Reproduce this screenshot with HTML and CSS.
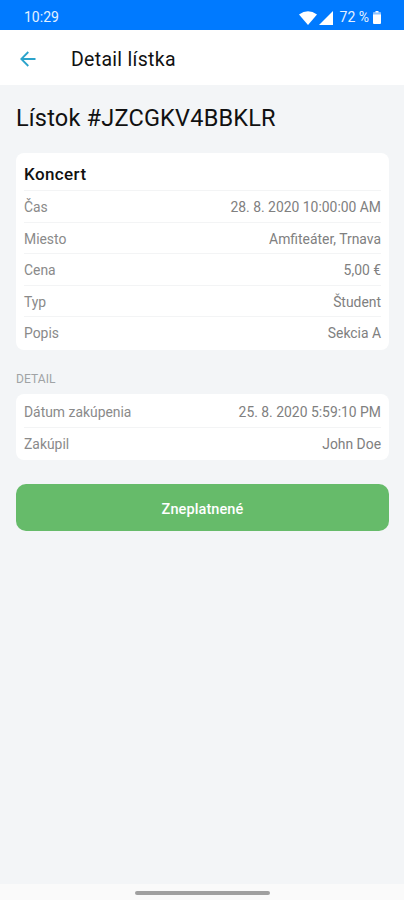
FILE: index.html
```
<!DOCTYPE html>
<html lang="sk">
<head>
<meta charset="utf-8">
<title>Detail lístka</title>
<link rel="stylesheet" href="styles.css">
</head>
<body>
<div class="status">
  <span class="clock">10:29</span>
  <svg class="wifi" viewBox="0 0 18 14"><path d="M0 3.500Q9-3 18 3.500L9 14Z" fill="#fff"/></svg>
  <svg class="signal" viewBox="0 0 14 14"><path d="M14 0V14H0Z" fill="#fff"/></svg>
  <span class="percent">72 %</span>
  <svg class="battery" viewBox="0 0 8 13"><path d="M2.500 0h3v1.500H7a1 1 0 0 1 1 1V12a1 1 0 0 1-1 1H1a1 1 0 0 1-1-1V2.500a1 1 0 0 1 1-1h1.500Z" fill="#fff"/><path d="M0 1.500h8v2H0Z" fill="#8cc2ff"/></svg>
</div>
<header class="appbar">
  <svg class="back" viewBox="0 0 16 16" fill="none" stroke="#2ba3cb" stroke-width="1.800"><path d="M15.500 8H1.500M8.300 1L1.300 8l7 7"/></svg>
  <span class="appbar-title">Detail lístka</span>
</header>
<main class="content">
  <h1 class="heading"><span>Lístok #JZCGKV4BBKLR</span></h1>
  <section class="card">
    <h2 class="card-title"><span>Koncert</span></h2>
    <div class="row"><span>Čas</span><span class="value">28. 8. 2020 10:00:00 AM</span></div>
    <div class="row"><span>Miesto</span><span class="value">Amfiteáter, Trnava</span></div>
    <div class="row"><span>Cena</span><span class="value">5,00 €</span></div>
    <div class="row"><span>Typ</span><span class="value">Študent</span></div>
    <div class="row"><span>Popis</span><span class="value">Sekcia A</span></div>
  </section>
  <h3 class="label"><span>DETAIL</span></h3>
  <section class="card card-small">
    <div class="row"><span>Dátum zakúpenia</span><span class="value">25. 8. 2020 5:59:10 PM</span></div>
    <div class="row"><span>Zakúpil</span><span class="value">John Doe</span></div>
  </section>
  <button class="action"><span>Zneplatnené</span></button>
</main>
<footer class="navbar"><div class="handle"></div></footer>
</body>
</html>
```
FILE: styles.css
```
* { box-sizing: border-box; }
body {
  margin: 0;
  height: 900px;
  display: flex;
  flex-direction: column;
  overflow: hidden;
  background: #f3f5f7;
  font-family: Roboto, sans-serif;
  color: #111;
}
.status {
  height: 30px;
  flex: none;
  display: flex;
  align-items: center;
  padding: 5px 23px 0 24px;
  background: #007aff;
  color: #e4f1ff;
  font-size: 14px;
}
.clock { margin-right: auto; padding-bottom: 1px; }
.wifi { width: 18px; height: 14px; margin-right: 2px; }
.signal { width: 14px; height: 14px; margin-right: 7px; }
.percent { margin-right: 4px; padding-bottom: 1px; }
.battery { width: 8px; height: 13px; }
.appbar {
  height: 55px;
  flex: none;
  display: flex;
  align-items: center;
  padding: 2px 20px 0;
  background: #fff;
}
.back { width: 16px; height: 16px; margin-right: 35px; }
.appbar-title { padding-top: 2px; font-size: 19.500px; letter-spacing: 0.3px; }
.content { flex: 1; padding: 0 15px 0 16px; }
.heading {
  margin: 0;
  height: 68px;
  line-height: 67px;
  font-size: 23.500px;
  font-weight: 400;
  letter-spacing: 0.200px;
}
.card {
  height: 197px;
  padding: 0 8px;
  border-radius: 8px;
  background: #fff;
}
.card-title {
  margin: 0;
  height: 37px;
  line-height: 42px;
  font-size: 17px;
  font-weight: 500;
  letter-spacing: 0.400px;
}
.row {
  height: 31.500px;
  display: flex;
  align-items: center;
  justify-content: space-between;
  padding-top: 2px;
  border-top: 1px solid #f3f4f5;
  color: #8a8a8a;
  font-size: 13.900px;
}
.value { color: #808080; }
.label {
  margin: 0;
  height: 44px;
  line-height: 58px;
  font-size: 12px;
  font-weight: 400;
  letter-spacing: 0.1px;
  color: #a0a3a5;
}
.card-small { height: 66px; padding-top: 1px; }
.card-small .row:first-child { border-top-color: transparent; }
.action {
  display: block;
  width: 100%;
  height: 47px;
  margin-top: 24px;
  padding: 3px 0 0;
  border: 0;
  border-radius: 10px;
  background: #66bb6a;
  color: #fff;
  font: 500 14.500px Roboto, sans-serif;
  letter-spacing: 0.1px;
}
.navbar {
  height: 16px;
  flex: none;
  display: flex;
  align-items: center;
  padding: 2px 0 0 135px;
  background: #fafafa;
}
.handle { width: 135px; height: 4px; border-radius: 2px; background: #a0a0a0; }
```
